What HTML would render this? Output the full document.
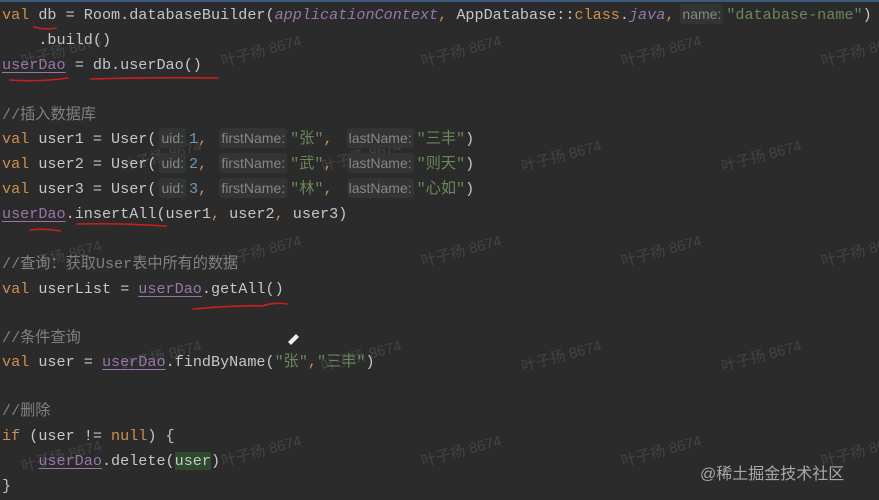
<!DOCTYPE html>
<html><head><meta charset="utf-8"><style>
html,body{margin:0;padding:0}
body{width:879px;height:500px;background:#2b2b2b;position:relative;overflow:hidden;font-family:"Liberation Mono","Noto Sans CJK SC",monospace;font-size:15.15px;color:#c4c6cc}
.topbar{position:absolute;left:0;top:0;width:879px;height:2px;background:#3b5a7a}
.l{position:absolute;left:2px;height:24px;line-height:24px;white-space:pre}
.k{color:#cf8e4a}
.s{color:#6a8759}
.n{color:#6897bb}
.c{color:#808080}
.p{color:#9876aa;text-decoration:underline;text-underline-offset:3px}
.i{color:#9876aa;font-style:italic}
.h{display:inline-block;font-family:"Liberation Sans",sans-serif;font-size:14px;color:#868686;background:#333434;border-radius:3px;padding:0 2px;line-height:20px;margin:0 3px}
.ln{margin-left:5px}
.g{background:#2e4a2e}
.wm{position:absolute;font-family:"Liberation Sans","Noto Sans CJK SC",sans-serif;font-size:15px;color:rgba(150,150,150,0.22);transform:rotate(-15deg);white-space:nowrap}
.jj{position:absolute;left:700px;top:460px;font-family:"Liberation Sans","Noto Sans CJK SC",sans-serif;font-size:16px;color:#a8a8a8}
svg{position:absolute;left:0;top:0}
</style></head><body>
<div class="topbar"></div>
<div class="wm" style="left:20px;top:40px">叶子扬 8674</div>
<div class="wm" style="left:220px;top:40px">叶子扬 8674</div>
<div class="wm" style="left:420px;top:40px">叶子扬 8674</div>
<div class="wm" style="left:620px;top:40px">叶子扬 8674</div>
<div class="wm" style="left:820px;top:40px">叶子扬 8674</div>
<div class="wm" style="left:120px;top:145px">叶子扬 8674</div>
<div class="wm" style="left:320px;top:145px">叶子扬 8674</div>
<div class="wm" style="left:520px;top:145px">叶子扬 8674</div>
<div class="wm" style="left:720px;top:145px">叶子扬 8674</div>
<div class="wm" style="left:20px;top:245px">叶子扬 8674</div>
<div class="wm" style="left:220px;top:240px">叶子扬 8674</div>
<div class="wm" style="left:420px;top:240px">叶子扬 8674</div>
<div class="wm" style="left:620px;top:240px">叶子扬 8674</div>
<div class="wm" style="left:820px;top:240px">叶子扬 8674</div>
<div class="wm" style="left:120px;top:345px">叶子扬 8674</div>
<div class="wm" style="left:320px;top:345px">叶子扬 8674</div>
<div class="wm" style="left:520px;top:345px">叶子扬 8674</div>
<div class="wm" style="left:720px;top:345px">叶子扬 8674</div>
<div class="wm" style="left:20px;top:445px">叶子扬 8674</div>
<div class="wm" style="left:220px;top:440px">叶子扬 8674</div>
<div class="wm" style="left:420px;top:440px">叶子扬 8674</div>
<div class="wm" style="left:620px;top:440px">叶子扬 8674</div>
<div class="wm" style="left:820px;top:440px">叶子扬 8674</div>

<div class="l" style="top:3px"><span class="k">val</span> db = Room.databaseBuilder(<span class="i">applicationContext</span><span class="k">,</span> AppDatabase::<span class="k">class</span>.<span class="i">java</span><span class="k">,</span><span class="h" style="margin-left:6px">name:</span><span class="s">"database-name"</span>)</div>
<div class="l" style="top:28px">    .build()</div>
<div class="l" style="top:53px"><span class="p">userDao</span> = db.userDao()</div>
<div class="l c" style="top:103px">//插入数据库</div>
<div class="l" style="top:127px"><span class="k">val</span> user1 = User(<span class="h">uid:</span><span class="n">1</span><span class="k">,</span> <span class="h">firstName:</span><span class="s">"张"</span><span class="k">,</span> <span class="h ln">lastName:</span><span class="s">"三丰"</span>)</div>
<div class="l" style="top:152px"><span class="k">val</span> user2 = User(<span class="h">uid:</span><span class="n">2</span><span class="k">,</span> <span class="h">firstName:</span><span class="s">"武"</span><span class="k">,</span> <span class="h ln">lastName:</span><span class="s">"则天"</span>)</div>
<div class="l" style="top:177px"><span class="k">val</span> user3 = User(<span class="h">uid:</span><span class="n">3</span><span class="k">,</span> <span class="h">firstName:</span><span class="s">"林"</span><span class="k">,</span> <span class="h ln">lastName:</span><span class="s">"心如"</span>)</div>
<div class="l" style="top:202px"><span class="p">userDao</span>.insertAll(user1<span class="k">,</span> user2<span class="k">,</span> user3)</div>
<div class="l c" style="top:252px">//查询：获取User表中所有的数据</div>
<div class="l" style="top:277px"><span class="k">val</span> userList = <span class="p">userDao</span>.getAll()</div>
<div class="l c" style="top:326px">//条件查询</div>
<div class="l" style="top:350px"><span class="k">val</span> user = <span class="p">userDao</span>.findByName(<span class="s">"张"</span><span class="k">,</span><span class="s">"三丰"</span>)</div>
<div class="l c" style="top:399px">//删除</div>
<div class="l" style="top:424px"><span class="k">if</span> (user != <span class="k">null</span>) {</div>
<div class="l" style="top:449px">    <span class="p">userDao</span>.delete(<span class="g">user</span>)</div>
<div class="l" style="top:474px">}</div>

<svg width="879" height="500">
<g stroke="#c8201e" stroke-width="1.6" fill="none" stroke-linecap="round">
<path d="M34 27 Q44 30 56 28"/>
<path d="M10 80 Q40 82 68 78"/>
<path d="M91 79 Q160 77 218 78"/>
<path d="M30 230 Q45 228 60 231"/>
<path d="M77 224 Q120 223 166 226"/>
<path d="M193 309 Q240 305 262 306 Q275 302 287 304"/>
</g>
<path d="M288 342 L296 334 L299 337 L291 345 Z" fill="#eee"/>
</svg>
<div class="jj">@稀土掘金技术社区</div>
</body></html>
